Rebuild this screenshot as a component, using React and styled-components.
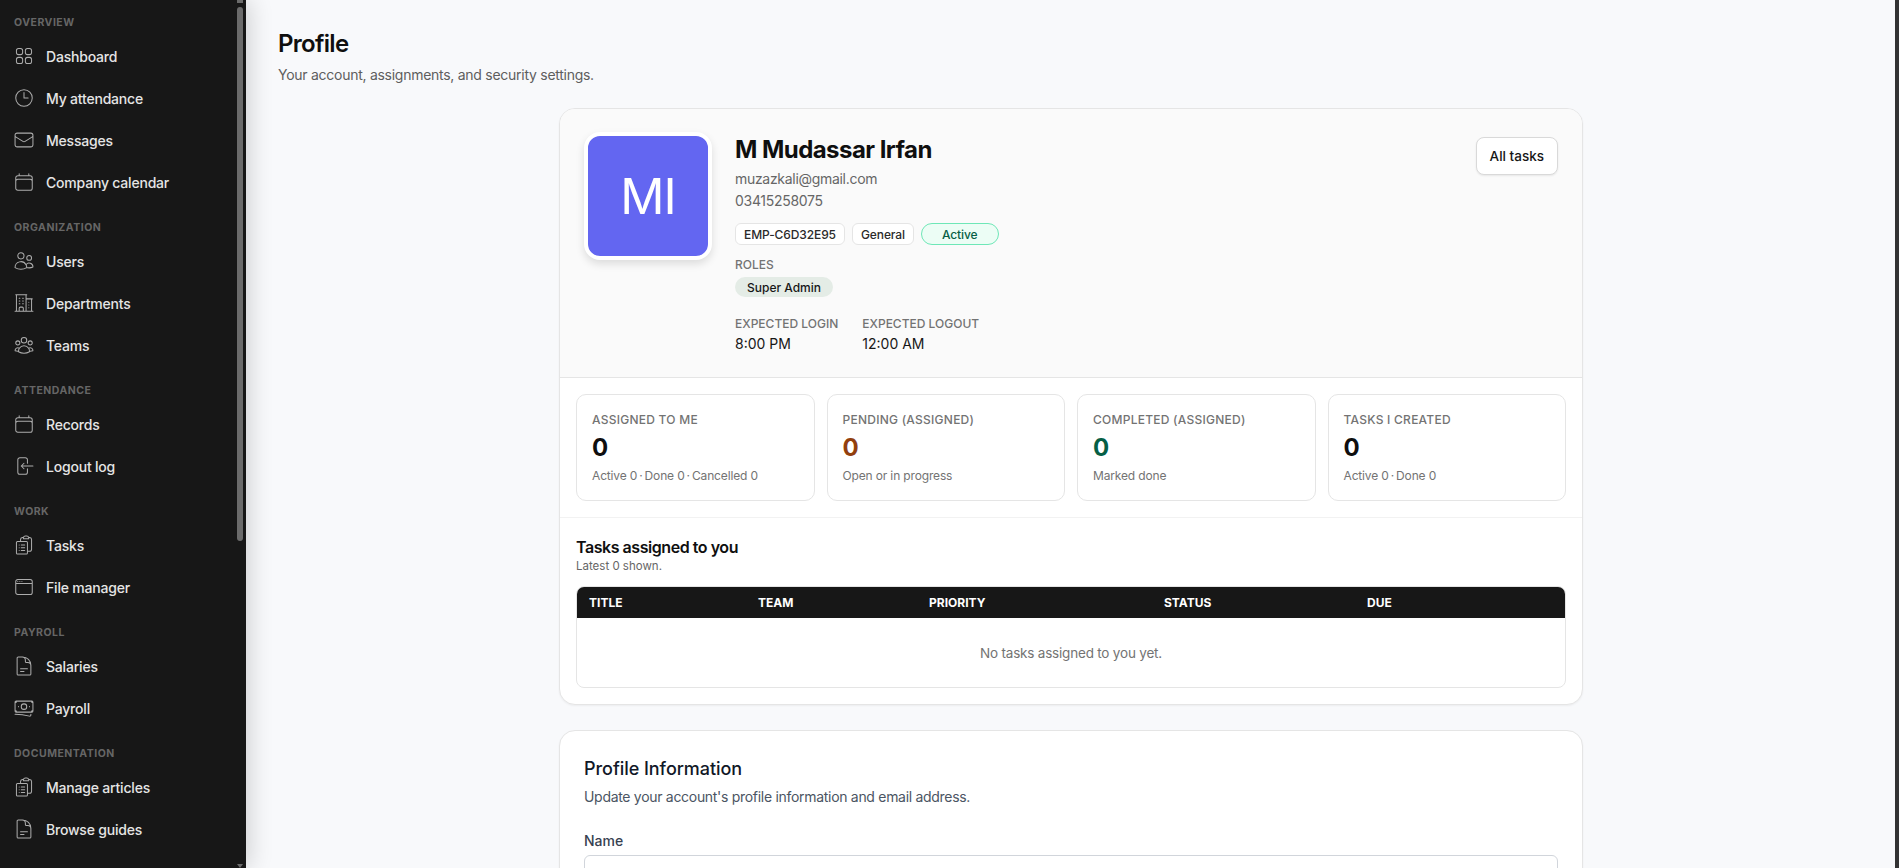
import * as React from 'react';
import styled, { createGlobalStyle } from 'styled-components';
import {
  HiOutlineSquares2X2,
  HiOutlineClock,
  HiOutlineEnvelope,
  HiOutlineCalendar,
  HiOutlineUsers,
  HiOutlineBuildingOffice2,
  HiOutlineUserGroup,
  HiOutlineArrowLeftOnRectangle,
  HiOutlineClipboardDocumentList,
  HiOutlineWindow,
  HiOutlineDocumentText,
  HiOutlineBanknotes
} from 'react-icons/hi2';

const GlobalStyle = createGlobalStyle`
  html, body {
    margin: 0;
    height: 100%;
    overflow: hidden;
  }
  body {
    font-family: Inter, "Liberation Sans", sans-serif;
    color: #171717;
    background: #f8f9fb;
  }
  * {
    box-sizing: border-box;
  }
`;

const Layout = styled.div`
  position: relative;
  display: flex;
  height: 868px;
  overflow: hidden;
`;
const Sidebar = styled.aside`
  position: relative;
  z-index: 1;
  flex: 0 0 246px;
  padding: 16px 12px 0 14px;
  background: #171717;
  box-shadow: 4px 0 22px rgba(0, 0, 0, 0.16);
  overflow: hidden;
`;
const NavGroup = styled.div`
  margin-bottom: 18px;
`;
const GroupLabel = styled.div`
  height: 14px;
  margin-bottom: 5px;
  font-size: 10.5px;
  line-height: 14px;
  font-weight: 700;
  letter-spacing: 0.5px;
  color: #666;
`;
const NavItem = styled.a`
  display: flex;
  align-items: center;
  gap: 11px;
  height: 42px;
  margin-left: -1px;
  font-size: 14px;
  font-weight: 500;
  letter-spacing: -0.2px;
  color: #e5e5e5;
  svg {
    flex: 0 0 22px;
    color: #adadad;
  }
`;
const ScrollThumb = styled.div`
  position: absolute;
  top: 7px;
  right: 3px;
  width: 6px;
  height: 534px;
  border-radius: 3px;
  background: #6b6b6b;
`;
const ScrollArrowUp = styled.div`
  position: absolute;
  top: 0;
  right: 3px;
  width: 6px;
  height: 3px;
  background: #6b6b6b;
`;
const ScrollArrowDown = styled.div`
  position: absolute;
  bottom: 0;
  right: 3px;
  width: 0;
  height: 0;
  border-top: 4px solid #6b6b6b;
  border-left: 3px solid transparent;
  border-right: 3px solid transparent;
`;
const PageScrollbar = styled.div`
  position: absolute;
  top: 0;
  right: 0;
  bottom: 0;
  width: 4px;
  background: #333;
`;
const Main = styled.main`
  flex: 1;
  padding: 32px 35px 0 32px;
  overflow: hidden;
`;
const PageTitle = styled.h1`
  margin: 0;
  font-size: 24px;
  line-height: 24px;
  font-weight: 600;
  letter-spacing: -0.7px;
  color: #0f0f0f;
`;
const PageSub = styled.p`
  margin: 9px 0 0;
  font-size: 14px;
  line-height: 20px;
  letter-spacing: -0.27px;
  color: #5e5e5e;
`;
const Column = styled.div`
  width: 1024px;
  margin: 23px auto 0;
`;
const Card = styled.section`
  margin-bottom: 25px;
  background: #fff;
  border: 1px solid #e5e5e5;
  border-radius: 16px;
  box-shadow: 0 1px 2px rgba(0, 0, 0, 0.05);
  overflow: hidden;
`;
const ProfileHead = styled.div`
  display: flex;
  align-items: flex-start;
  gap: 23px;
  height: 269px;
  padding: 23px 24px 0;
  background: #fafafa;
  border-bottom: 1px solid #e5e5e5;
`;
const Avatar = styled.div`
  display: flex;
  align-items: center;
  justify-content: center;
  flex: 0 0 128px;
  height: 128px;
  border: 4px solid #fff;
  border-radius: 16px;
  background: #6366f1;
  box-shadow: 0 4px 8px rgba(0, 0, 0, 0.12);
  font-size: 49px;
  font-weight: 400;
  letter-spacing: -1px;
  color: #fff;
`;
const Identity = styled.div`
  flex: 1;
  padding-top: 2px;
`;
const Name = styled.h2`
  margin: 0;
  font-size: 24px;
  line-height: 32px;
  font-weight: 700;
  letter-spacing: -0.55px;
  color: #0f0f0f;
`;
const Contact = styled.div`
  font-size: 14px;
  line-height: 22px;
  letter-spacing: -0.3px;
  color: #666;
  &:first-of-type {
    margin-top: 2px;
  }
`;
const Badges = styled.div`
  display: flex;
  gap: 7px;
  margin-top: 11px;
`;
const Badge = styled.span`
  display: inline-flex;
  align-items: center;
  height: 22px;
  padding: 0 8px;
  border: 1px solid #e5e5e5;
  border-radius: 6px;
  background: #fff;
  font-size: 12px;
  font-weight: 500;
  letter-spacing: -0.1px;
  color: #2a2a2a;
`;
const StatusBadge = styled(Badge)`
  padding: 0 20px;
  border-color: #6ee7b7;
  border-radius: 999px;
  background: #ecfdf5;
  color: #065f46;
`;
const SmallLabel = styled.div`
  font-size: 12px;
  line-height: 16px;
  font-weight: 500;
  color: #737373;
  text-transform: uppercase;
`;
const RolesLabel = styled(SmallLabel)`
  margin-top: 12px;
`;
const RolePill = styled.span`
  display: inline-flex;
  align-items: center;
  height: 20px;
  margin-top: 4px;
  padding: 0 12px;
  border-radius: 999px;
  background: #e4ece6;
  font-size: 12px;
  font-weight: 500;
  color: #171717;
`;
const Expected = styled.div`
  display: flex;
  gap: 24px;
  margin-top: 19px;
`;
const ExpectedValue = styled.div`
  margin-top: 2px;
  font-size: 14px;
  line-height: 20px;
  color: #171717;
`;
const OutlineButton = styled.button`
  flex: 0 0 auto;
  height: 38px;
  margin-top: 5px;
  padding: 0 13px;
  border: 1px solid #d9d9d9;
  border-radius: 8px;
  background: #fff;
  box-shadow: 0 1px 2px rgba(0, 0, 0, 0.08);
  font-family: inherit;
  font-size: 13.5px;
  font-weight: 500;
  color: #171717;
`;
const StatsRow = styled.div`
  display: grid;
  grid-template-columns: repeat(4, 1fr);
  gap: 12px;
  padding: 16px;
  border-bottom: 1px solid #f2f2f2;
`;
const StatCard = styled.div`
  height: 107px;
  padding: 17px 15px 0;
  border: 1px solid #e5e5e5;
  border-radius: 10px;
  background: #fff;
`;
const StatLabel = styled.div`
  font-size: 12px;
  line-height: 16px;
  font-weight: 500;
  letter-spacing: 0.25px;
  color: #737373;
  text-transform: uppercase;
`;
const StatValue = styled.div`
  margin-top: 6px;
  font-size: 24px;
  line-height: 28px;
  font-weight: 700;
  color: ${props => props.color || '#0f0f0f'};
`;
const StatHint = styled.div`
  margin-top: 6px;
  font-size: 12px;
  line-height: 16px;
  letter-spacing: -0.15px;
  color: #737373;
`;
const TasksSection = styled.div`
  padding: 18px 16px 16px;
`;
const TasksTitle = styled.h3`
  margin: 0;
  font-size: 16px;
  line-height: 22px;
  font-weight: 600;
  letter-spacing: -0.45px;
  color: #0f0f0f;
`;
const TasksHint = styled.div`
  font-size: 11.5px;
  line-height: 16px;
  color: #666;
`;
const TableWrap = styled.div`
  margin-top: 12px;
  border: 1px solid #e5e5e5;
  border-radius: 8px;
  overflow: hidden;
`;
const TableHead = styled.div`
  display: grid;
  grid-template-columns: 169px 171px 235px 203px 1fr;
  align-items: center;
  height: 32px;
  margin: -1px -1px 0;
  padding: 0 13px;
  background: #171717;
  font-size: 12px;
  font-weight: 700;
  color: #fff;
  text-transform: uppercase;
`;
const EmptyRow = styled.div`
  display: flex;
  align-items: center;
  justify-content: center;
  height: 69px;
  font-size: 13.5px;
  letter-spacing: -0.2px;
  color: #737373;
`;
const FormCard = styled(Card)`
  padding: 24px;
`;
const FormTitle = styled.h3`
  margin: 0;
  font-size: 18px;
  line-height: 28px;
  font-weight: 500;
  letter-spacing: -0.05px;
  color: #111827;
`;
const FormHint = styled.p`
  margin: 4px 0 0;
  font-size: 14px;
  line-height: 20px;
  letter-spacing: -0.3px;
  color: #4b5563;
`;
const FieldLabel = styled.label`
  display: block;
  margin-top: 24px;
  font-size: 14px;
  line-height: 20px;
  font-weight: 500;
  color: #374151;
`;
const TextInput = styled.input`
  display: block;
  width: 100%;
  height: 42px;
  margin-top: 4px;
  border: 1px solid #d1d5db;
  border-radius: 6px;
  background: #fff;
`;

const navGroups = [
  {
    label: 'Overview',
    items: [
      ['Dashboard', HiOutlineSquares2X2],
      ['My attendance', HiOutlineClock],
      ['Messages', HiOutlineEnvelope],
      ['Company calendar', HiOutlineCalendar]
    ]
  },
  {
    label: 'Organization',
    items: [
      ['Users', HiOutlineUsers],
      ['Departments', HiOutlineBuildingOffice2],
      ['Teams', HiOutlineUserGroup]
    ]
  },
  {
    label: 'Attendance',
    items: [
      ['Records', HiOutlineCalendar],
      ['Logout log', HiOutlineArrowLeftOnRectangle]
    ]
  },
  {
    label: 'Work',
    items: [
      ['Tasks', HiOutlineClipboardDocumentList],
      ['File manager', HiOutlineWindow]
    ]
  },
  {
    label: 'Payroll',
    items: [
      ['Salaries', HiOutlineDocumentText],
      ['Payroll', HiOutlineBanknotes]
    ]
  },
  {
    label: 'Documentation',
    items: [
      ['Manage articles', HiOutlineClipboardDocumentList],
      ['Browse guides', HiOutlineDocumentText]
    ]
  }
];

const stats = [
  { label: 'Assigned to me', value: 0, hint: 'Active 0\u2009·\u2009Done 0\u2009·\u2009Cancelled 0' },
  { label: 'Pending (assigned)', value: 0, color: '#92400e', hint: 'Open or in progress' },
  { label: 'Completed (assigned)', value: 0, color: '#065f46', hint: 'Marked done' },
  { label: 'Tasks I created', value: 0, hint: 'Active 0\u2009·\u2009Done 0' }
];

const App = () => (
  <Layout>
    <GlobalStyle />
    <Sidebar>
      {navGroups.map(group => (
        <NavGroup key={group.label}>
          <GroupLabel>{group.label.toUpperCase()}</GroupLabel>
          {group.items.map(([label, Icon]) => (
            <NavItem key={label}>
              <Icon size={22} strokeWidth={1.1} />
              {label}
            </NavItem>
          ))}
        </NavGroup>
      ))}
      <ScrollArrowUp />
      <ScrollThumb />
      <ScrollArrowDown />
    </Sidebar>
    <Main>
      <PageTitle>Profile</PageTitle>
      <PageSub>Your account, assignments, and security settings.</PageSub>
      <Column>
        <Card>
          <ProfileHead>
            <Avatar>MI</Avatar>
            <Identity>
              <Name>M Mudassar Irfan</Name>
              <Contact>muzazkali@gmail.com</Contact>
              <Contact>03415258075</Contact>
              <Badges>
                <Badge>EMP-C6D32E95</Badge>
                <Badge>General</Badge>
                <StatusBadge>Active</StatusBadge>
              </Badges>
              <RolesLabel>Roles</RolesLabel>
              <RolePill>Super Admin</RolePill>
              <Expected>
                <div>
                  <SmallLabel>Expected login</SmallLabel>
                  <ExpectedValue>8:00 PM</ExpectedValue>
                </div>
                <div>
                  <SmallLabel>Expected logout</SmallLabel>
                  <ExpectedValue>12:00 AM</ExpectedValue>
                </div>
              </Expected>
            </Identity>
            <OutlineButton type="button">All tasks</OutlineButton>
          </ProfileHead>
          <StatsRow>
            {stats.map(stat => (
              <StatCard key={stat.label}>
                <StatLabel>{stat.label}</StatLabel>
                <StatValue color={stat.color}>{stat.value}</StatValue>
                <StatHint>{stat.hint}</StatHint>
              </StatCard>
            ))}
          </StatsRow>
          <TasksSection>
            <TasksTitle>Tasks assigned to you</TasksTitle>
            <TasksHint>Latest 0 shown.</TasksHint>
            <TableWrap>
              <TableHead>
                <span>Title</span>
                <span>Team</span>
                <span>Priority</span>
                <span>Status</span>
                <span>Due</span>
              </TableHead>
              <EmptyRow>No tasks assigned to you yet.</EmptyRow>
            </TableWrap>
          </TasksSection>
        </Card>
        <FormCard>
          <FormTitle>Profile Information</FormTitle>
          <FormHint>Update your account's profile information and email address.</FormHint>
          <FieldLabel>Name</FieldLabel>
          <TextInput type="text" />
        </FormCard>
      </Column>
    </Main>
    <PageScrollbar />
  </Layout>
);

export default App;
